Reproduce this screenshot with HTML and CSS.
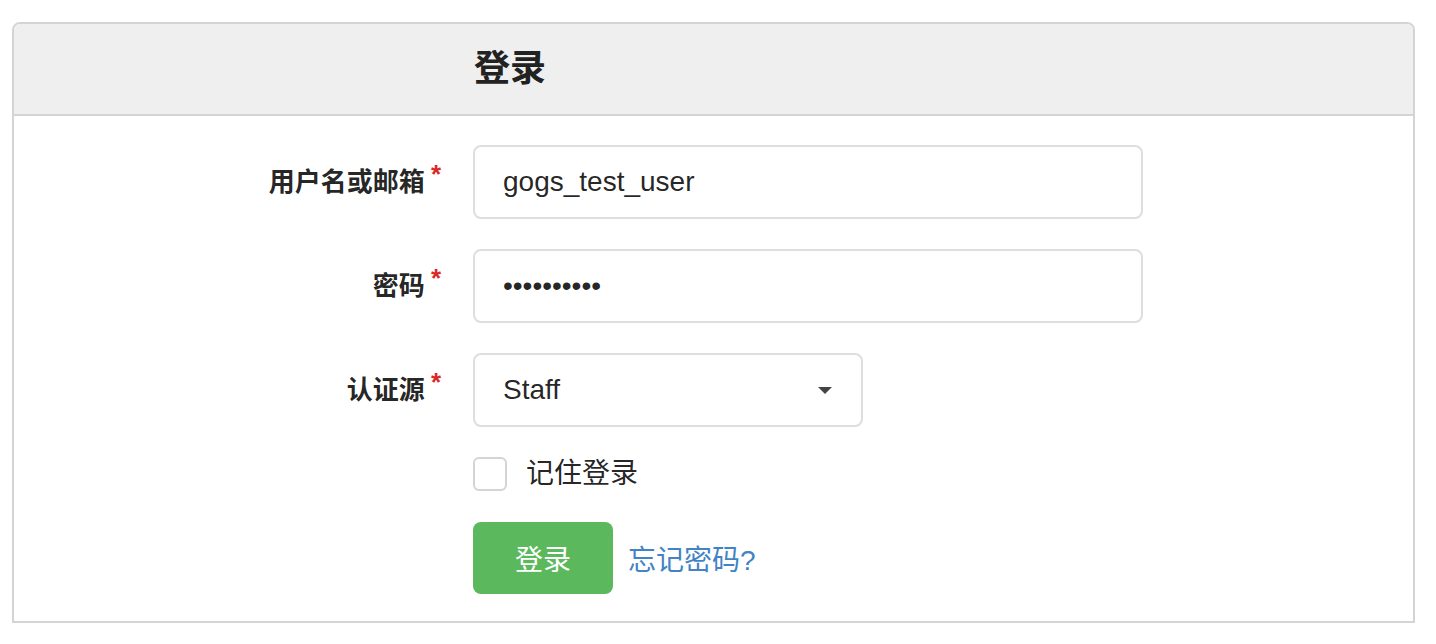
FILE: index.html
```html
<!DOCTYPE html>
<html lang="zh-CN">
<head>
<meta charset="utf-8">
<title>登录</title>
<link rel="stylesheet" href="styles.css">
</head>
<body>
<div class="card">
  <h3 class="card-header">登录</h3>
  <form class="card-body">
    <div class="field">
      <label class="field-label required">用户名或邮箱</label>
      <input class="text-input wide" type="text" value="gogs_test_user">
    </div>
    <div class="field">
      <label class="field-label required">密码</label>
      <input class="text-input wide" type="password" value="0123456789">
    </div>
    <div class="field">
      <label class="field-label required">认证源</label>
      <div class="dropdown"><span>Staff</span><span class="caret"></span></div>
    </div>
    <div class="field short">
      <span class="field-label"></span>
      <label class="checkbox"><span class="box"></span><span>记住登录</span></label>
    </div>
    <div class="field last">
      <span class="field-label"></span>
      <button class="btn" type="button">登录</button>
      <a class="link" href="#">忘记密码?</a>
    </div>
  </form>
</div>
</body>
</html>
```
FILE: styles.css
```css
html, body {
  margin: 0;
  background: #ffffff;
}
body {
  padding: 22px 21px 0 12px;
  font-family: "Liberation Sans", "Noto Sans CJK SC", sans-serif;
  color: rgba(0, 0, 0, 0.87);
}
.card {
  border: 2px solid #d4d4d5;
  border-radius: 8px 8px 0 0;
}
.card-header {
  margin: 0;
  background: #efefef;
  border-bottom: 2px solid #d4d4d5;
  border-radius: 6px 6px 0 0;
  padding: 22px 0 22px 460px;
  font-size: 36px;
  line-height: 46px;
  font-weight: 700;
  color: #222;
}
.card-body {
  padding: 29px 0 27px 0;
  margin: 0;
}
.field {
  display: flex;
  align-items: center;
  margin-bottom: 30px;
}
.field.short {
  margin-bottom: 31px;
}
.field.last {
  margin-bottom: 0;
}
.field-label {
  width: 427px;
  flex: none;
  margin-right: 32px;
  padding-bottom: 8px;
  text-align: right;
  font-size: 26px;
  font-weight: 700;
  color: rgba(0, 0, 0, 0.87);
}
.required::after {
  content: "*";
  color: #db2828;
  margin-left: 6px;
  vertical-align: 0.3em;
  font-size: 26px;
}
.text-input {
  box-sizing: border-box;
  height: 74px;
  border: 2px solid #dedede;
  border-radius: 8px;
  padding: 0 28px;
  font-family: "Liberation Sans", sans-serif;
  font-size: 28px;
  color: rgba(0, 0, 0, 0.87);
  outline: none;
  background: #fff;
}
.text-input.wide {
  width: 670px;
}
.dropdown {
  box-sizing: border-box;
  width: 390px;
  height: 74px;
  border: 2px solid #dedede;
  border-radius: 8px;
  padding: 0 29px 0 28px;
  display: flex;
  align-items: center;
  justify-content: space-between;
  font-size: 28px;
}
.caret {
  width: 0;
  height: 0;
  border-left: 7px solid transparent;
  border-right: 7px solid transparent;
  border-top: 7px solid #444;
}
.checkbox {
  display: flex;
  align-items: center;
  gap: 19px;
  font-size: 28px;
  line-height: 34px;
  color: rgba(0, 0, 0, 0.87);
}
.box {
  box-sizing: border-box;
  width: 34px;
  height: 34px;
  border: 2px solid #d4d4d5;
  border-radius: 6px;
  background: #fff;
}
.btn {
  box-sizing: border-box;
  width: 140px;
  height: 72px;
  border: none;
  border-radius: 8px;
  background: #5cb85c;
  color: #fff;
  font-family: "Liberation Sans", "Noto Sans CJK SC", sans-serif;
  font-size: 28px;
  padding: 0;
  margin-right: 15px;
}
.link {
  color: #4183c4;
  font-size: 28px;
  text-decoration: none;
}
```
